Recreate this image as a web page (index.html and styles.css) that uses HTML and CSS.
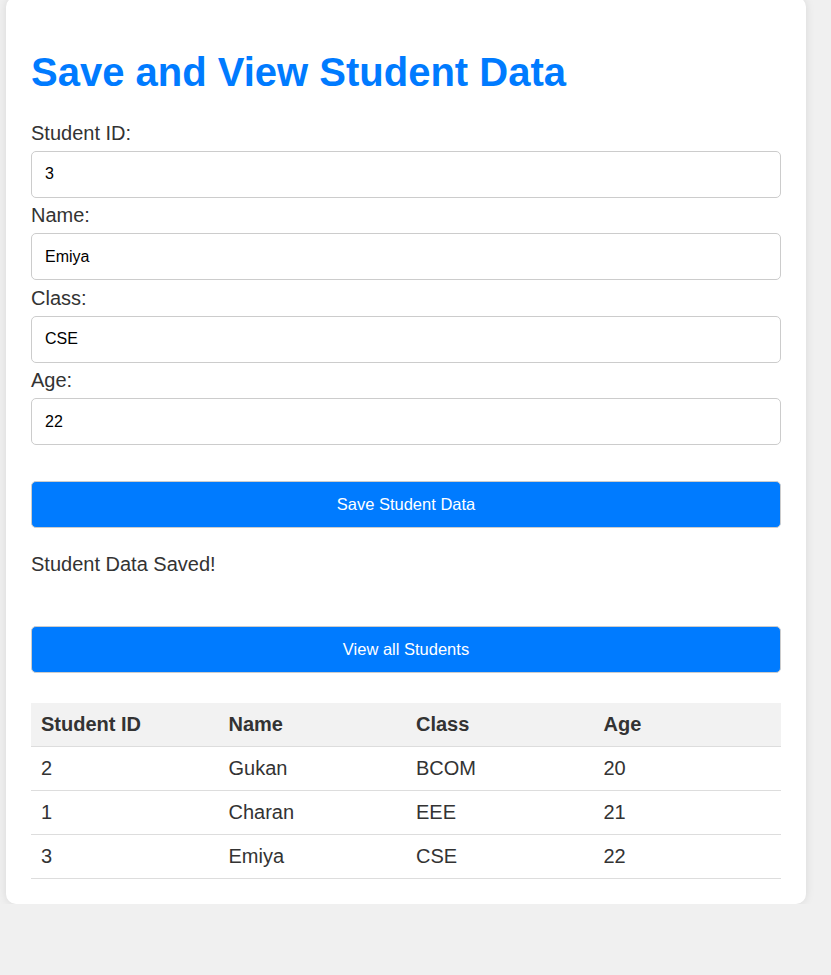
FILE: index.html
```html
<!DOCTYPE html>
<html lang="en">
<head>
<meta charset="utf-8">
<title>Save and View Student Data</title>
<link rel="stylesheet" href="styles.css">
</head>
<body>
<div class="card">
  <h1 class="title">Save and View Student Data</h1>
  <form class="form">
    <label class="label" for="sid">Student ID:</label>
    <input class="field" id="sid" type="text" value="3">
    <label class="label" for="sname">Name:</label>
    <input class="field" id="sname" type="text" value="Emiya">
    <label class="label" for="sclass">Class:</label>
    <input class="field" id="sclass" type="text" value="CSE">
    <label class="label" for="sage">Age:</label>
    <input class="field" id="sage" type="text" value="22">
    <button class="btn btn-save" type="button">Save Student Data</button>
  </form>
  <p class="message">Student Data Saved!</p>
  <button class="btn btn-view" type="button">View all Students</button>
  <table class="table">
    <thead>
      <tr><th>Student ID</th><th>Name</th><th>Class</th><th>Age</th></tr>
    </thead>
    <tbody>
      <tr><td>2</td><td>Gukan</td><td>BCOM</td><td>20</td></tr>
      <tr><td>1</td><td>Charan</td><td>EEE</td><td>21</td></tr>
      <tr><td>3</td><td>Emiya</td><td>CSE</td><td>22</td></tr>
    </tbody>
  </table>
</div>
</body>
</html>
```
FILE: styles.css
```css
html, body {
  margin: 0;
  padding: 0;
}
body {
  background: #f0f0f0;
  font-family: "Liberation Sans", Arial, sans-serif;
  font-size: 20px;
  color: #333;
  padding: 0 6px;
}
.card {
  width: 800px;
  box-sizing: border-box;
  margin-top: -3px;
  padding: 25px;
  background: #fff;
  border-radius: 10px;
  box-shadow: 0 0 10px rgba(0, 0, 0, 0.1);
}
.title {
  margin: 26.8px 0;
  font-size: 40px;
  font-weight: bold;
  color: #007bff;
  line-height: 46px;
}
.form {
  margin: 0;
}
.label {
  display: block;
  line-height: 23px;
}
.field {
  display: block;
  width: 100%;
  height: 47px;
  box-sizing: border-box;
  margin: 6.3px 0 6.2px;
  padding: 0 13px;
  border: 1px solid #ccc;
  border-radius: 5px;
  font-family: "Liberation Sans", Arial, sans-serif;
  font-size: 16px;
  color: #000;
  background: #fff;
}
.btn {
  display: block;
  width: 100%;
  height: 47px;
  box-sizing: border-box;
  border: 1px solid #ccc;
  border-radius: 5px;
  background: #007bff;
  color: #fff;
  font-family: "Liberation Sans", Arial, sans-serif;
  font-size: 16.5px;
  padding: 0;
}
.btn-save {
  margin-top: 35.6px;
}
.message {
  margin: 25.5px 0 0;
  line-height: 23px;
}
.btn-view {
  margin-top: 50px;
}
.table {
  width: 100%;
  margin-top: 30px;
  border-collapse: collapse;
  table-layout: fixed;
}
.table th,
.table td {
  padding: 10px;
  text-align: left;
  border-bottom: 1px solid #ddd;
  line-height: 23px;
}
.table th {
  background: #f2f2f2;
  font-weight: bold;
}
```
